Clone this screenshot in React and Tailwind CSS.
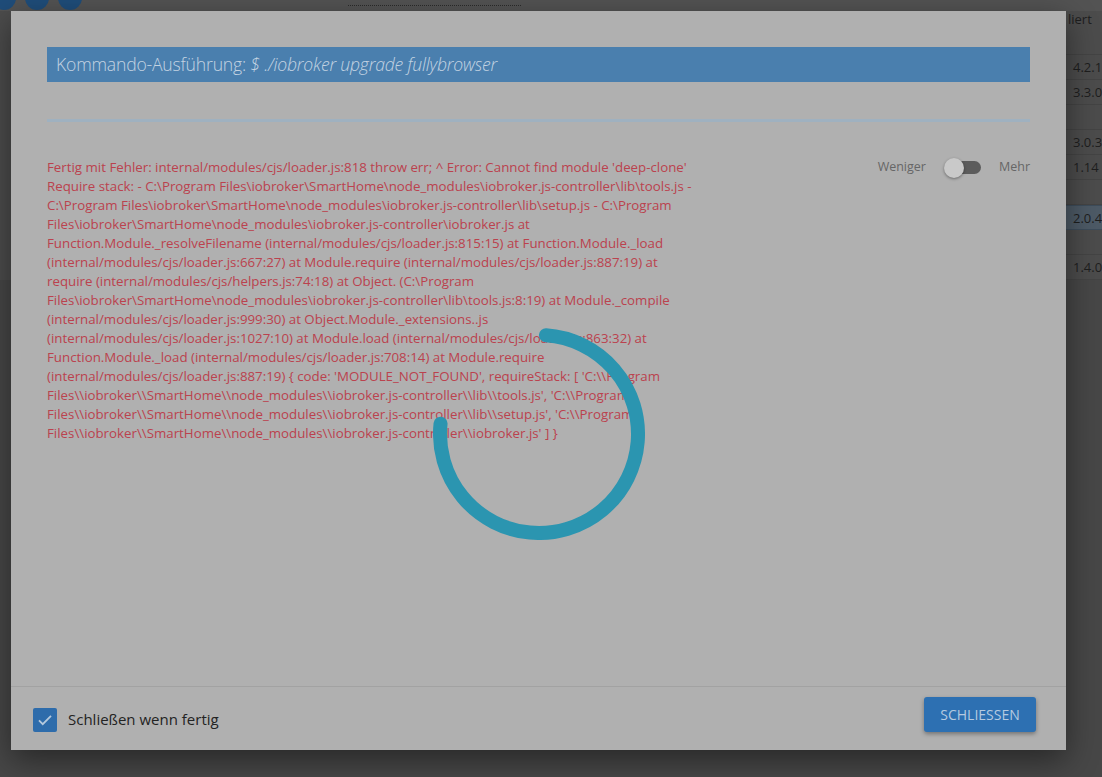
import React, { useState } from "react";

const errorLines = [
  String.raw`Fertig mit Fehler: internal/modules/cjs/loader.js:818 throw err; ^ Error: Cannot find module 'deep-clone'`,
  String.raw`Require stack: - C:\Program Files\iobroker\SmartHome\node_modules\iobroker.js-controller\lib\tools.js -`,
  String.raw`C:\Program Files\iobroker\SmartHome\node_modules\iobroker.js-controller\lib\setup.js - C:\Program`,
  String.raw`Files\iobroker\SmartHome\node_modules\iobroker.js-controller\iobroker.js at`,
  String.raw`Function.Module._resolveFilename (internal/modules/cjs/loader.js:815:15) at Function.Module._load`,
  String.raw`(internal/modules/cjs/loader.js:667:27) at Module.require (internal/modules/cjs/loader.js:887:19) at`,
  String.raw`require (internal/modules/cjs/helpers.js:74:18) at Object. (C:\Program`,
  String.raw`Files\iobroker\SmartHome\node_modules\iobroker.js-controller\lib\tools.js:8:19) at Module._compile`,
  String.raw`(internal/modules/cjs/loader.js:999:30) at Object.Module._extensions..js`,
  String.raw`(internal/modules/cjs/loader.js:1027:10) at Module.load (internal/modules/cjs/loader.js:863:32) at`,
  String.raw`Function.Module._load (internal/modules/cjs/loader.js:708:14) at Module.require`,
  String.raw`(internal/modules/cjs/loader.js:887:19) { code: 'MODULE_NOT_FOUND', requireStack: [ 'C:\\Program`,
  String.raw`Files\\iobroker\\SmartHome\\node_modules\\iobroker.js-controller\\lib\\tools.js', 'C:\\Program`,
  String.raw`Files\\iobroker\\SmartHome\\node_modules\\iobroker.js-controller\\lib\\setup.js', 'C:\\Program`,
  String.raw`Files\\iobroker\\SmartHome\\node_modules\\iobroker.js-controller\\iobroker.js' ] }`,
];

// rows of the adapter table behind the dialog
const rows = ["4.2.1", "3.3.0", "", "3.0.3", "1.14", "", "2.0.4", "", "1.4.0"];

function Spinner() {
  // arc from about -86deg clockwise to 186deg
  const cx = 106, cy = 106, r = 99;
  const a1 = (-86 * Math.PI) / 180;
  const a2 = (186 * Math.PI) / 180;
  const x1 = cx + r * Math.cos(a1), y1 = cy + r * Math.sin(a1);
  const x2 = cx + r * Math.cos(a2), y2 = cy + r * Math.sin(a2);
  return (
    <svg width="212" height="212" viewBox="0 0 212 212">
      <path
        d={`M ${x1} ${y1} A ${r} ${r} 0 1 1 ${x2} ${y2}`}
        fill="none"
        stroke="#2b95b0"
        strokeWidth="14"
        strokeLinecap="round"
      />
    </svg>
  );
}

function App() {
  const [closeWhenDone, setCloseWhenDone] = useState(true);
  const [more, setMore] = useState(false);

  return (
    <div
      className="relative w-[1102px] h-[777px] overflow-hidden bg-[#474747]"
      style={{ fontFamily: "'Open Sans', 'Noto Sans', sans-serif" }}
    >
      {/* page behind the dialog */}
      <div className="flex flex-col h-full">
        <div className="h-[11px] bg-[#535353] flex items-start">
          <div className="flex gap-[9px] -mt-[14px] -ml-[8px]">
            <div className="w-[24px] h-[24px] rounded-full bg-[#1f4d7a]" />
            <div className="w-[24px] h-[24px] rounded-full bg-[#1f4d7a]" />
            <div className="w-[24px] h-[24px] rounded-full bg-[#1f4d7a]" />
          </div>
          <div className="ml-[266px] w-[173px] h-[6px] border-b border-dotted border-[#2a2a2a]" />
        </div>
        <div className="flex justify-end bg-[#4c4c4c]">
          <div className="w-[36px] flex flex-col text-[13px] text-[#1e1e1e]">
            <div className="h-[17px] leading-[17px] pl-[2px] whitespace-nowrap">liert</div>
            <div className="h-[27px] border-b border-[#444]" />
            {rows.map((v, i) => (
              <div
                key={i}
                className={
                  i === 6
                    ? "h-[25px] leading-[25px] pl-[7px] bg-[#4d5a66] border-y border-[#3d4c5a]"
                    : "h-[25px] leading-[25px] pl-[7px] border-b border-[#444]"
                }
              >
                {v}
              </div>
            ))}
          </div>
        </div>
      </div>

      {/* dialog */}
      <div className="absolute left-[11px] top-[11px] w-[1055px] h-[739px] bg-[#b0b0b0] flex flex-col shadow-[0_10px_30px_rgba(0,0,0,0.45)]">
        <div className="flex-1 px-[36px] pt-[36px] flex flex-col">
          <div className="h-[35px] bg-[#4a7fae] flex items-center pl-[9px] text-[17.6px] tracking-[-0.2px] text-[#c3d3e2] font-light">
            <span>Kommando-Ausführung:&nbsp;</span>
            <span className="italic">$ ./iobroker upgrade fullybrowser</span>
          </div>
          <div className="mt-[37px] h-[3px] bg-[#9fb1c0]" />
          <div className="mt-[36px] flex justify-between">
            <div className="text-[13.3px] leading-[19px] text-[#bb424e] whitespace-nowrap">
              {errorLines.map((l, i) => (
                <div key={i}>{l}</div>
              ))}
            </div>
            <div className="flex items-center h-[19px] text-[12.5px] text-[#666]">
              <span>Weniger</span>
              <button
                onClick={() => setMore(!more)}
                className="relative mx-[18px] w-[37px] h-[20px] flex items-center"
              >
                <span className="absolute right-0 w-[25px] h-[13px] rounded-full bg-[#5c5c5c]" />
                <span
                  className={
                    more
                      ? "absolute left-[17px] w-[20px] h-[20px] rounded-full bg-[#c9c9c9] shadow-[0_1px_3px_rgba(0,0,0,0.4)]"
                      : "absolute left-0 w-[20px] h-[20px] rounded-full bg-[#c9c9c9] shadow-[0_1px_3px_rgba(0,0,0,0.4)]"
                  }
                />
              </button>
              <span>Mehr</span>
            </div>
          </div>
        </div>

        <div className="h-[64px] border-t border-[#a2a2a2] flex items-center justify-between pl-[22px] pr-[30px]">
          <label className="flex items-center gap-[11px] cursor-pointer mt-[2px]">
            <span
              onClick={() => setCloseWhenDone(!closeWhenDone)}
              className={
                closeWhenDone
                  ? "w-[24px] h-[24px] rounded-[2px] bg-[#2e6cab] flex items-center justify-center"
                  : "w-[24px] h-[24px] rounded-[2px] border-2 border-[#555]"
              }
            >
              {closeWhenDone && (
                <svg width="18" height="18" viewBox="0 0 24 24">
                  <path d="M4 12.5l5 5L20 6.5" fill="none" stroke="#b5c9dd" strokeWidth="2.4" />
                </svg>
              )}
            </span>
            <span className="text-[15px] text-[#232323]">Schließen wenn fertig</span>
          </label>
          <button className="w-[112px] h-[35px] rounded-[3px] bg-[#2d70b2] text-[14px] text-[#b5cae0] shadow-[0_2px_4px_rgba(0,0,0,0.35)] mb-[8px]">
            SCHLIESSEN
          </button>
        </div>
      </div>

      {/* loading spinner over the dialog */}
      <div className="absolute left-[433px] top-[328px]">
        <Spinner />
      </div>
    </div>
  );
}

export default App;
